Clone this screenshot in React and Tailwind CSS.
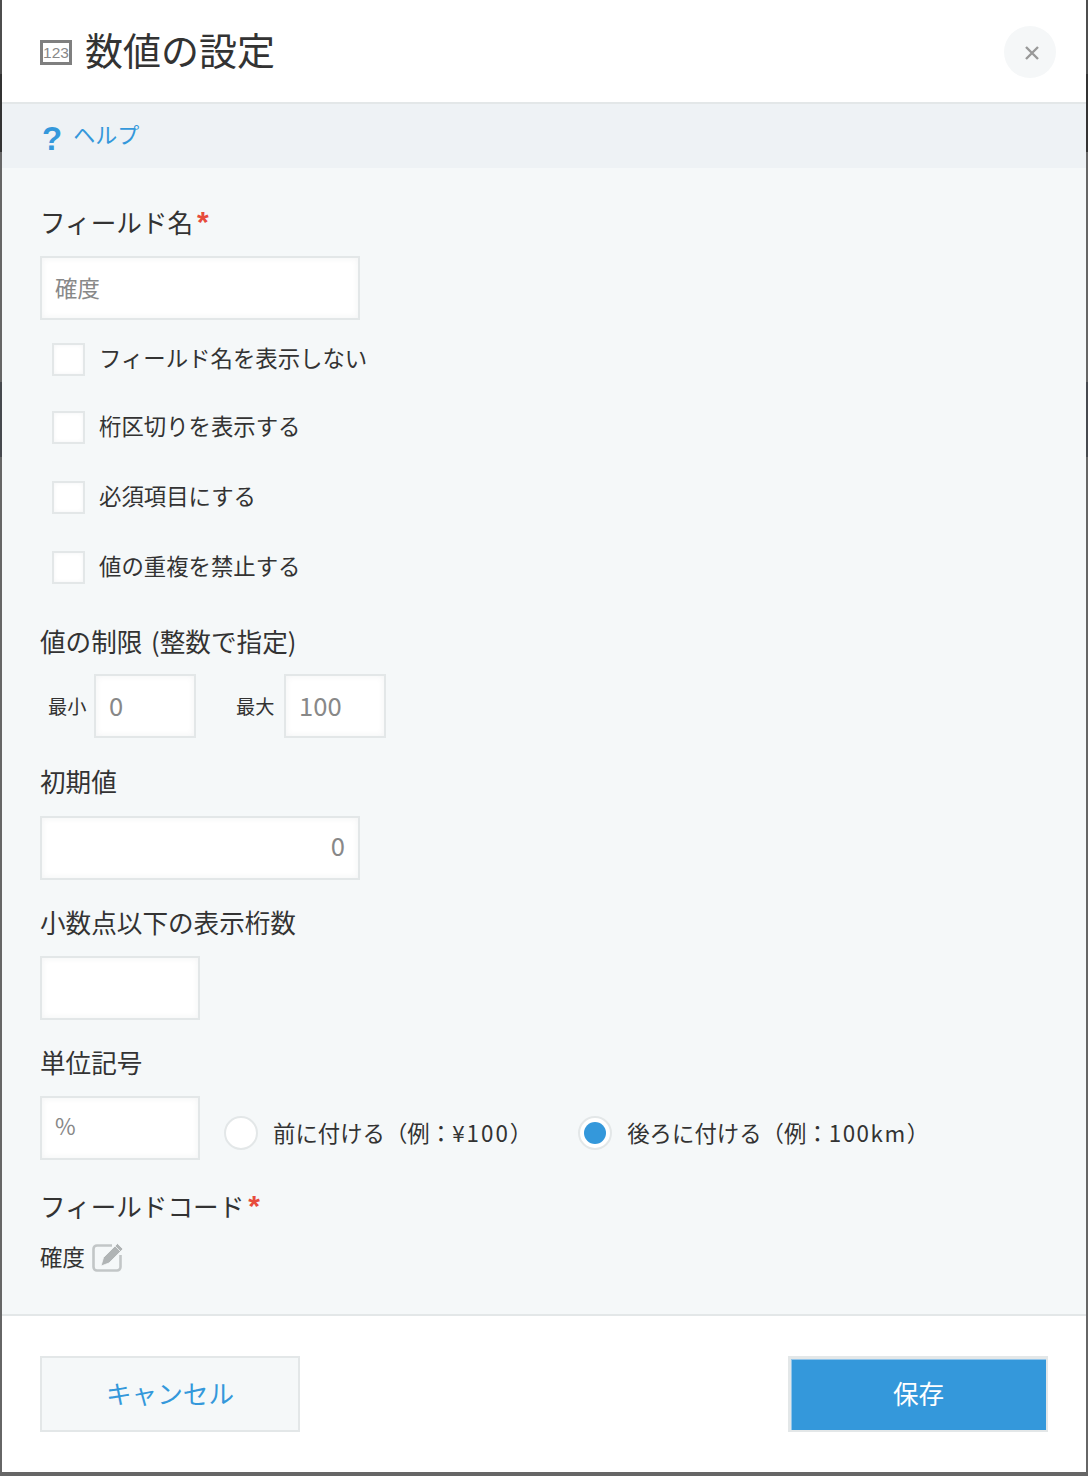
const FONT = "font-['Noto_Sans_CJK_JP','Noto_Sans',sans-serif]";

const inputCls = "h-16 border-2 border-[#e3e7e8] bg-white shadow-[inset_0_0_6px_rgba(55,70,80,0.07)] text-[#888888] flex items-center";

function Req() {
  return <span className="text-[#e74c3c] text-[30px] leading-none ml-1 h-[22px] -mt-[8px] inline-block font-bold font-['Liberation_Sans',sans-serif]">*</span>;
}

function Label({ children, className = "" }) {
  return <div className={`h-9 flex items-center pb-[2px] text-[25.6px] text-[#333333] whitespace-pre ${className}`}>{children}</div>;
}

function Check({ label, className = "" }) {
  return (
    <div className={`flex items-center h-8 pl-3 ${className}`}>
      <span className="w-[33px] h-[33px] border-2 border-[#e3e7e8] bg-white shadow-[inset_0_0_4px_rgba(55,70,80,0.06)]" />
      <span className="ml-[14px] pb-[2px] text-[22.4px] text-[#333333]">{label}</span>
    </div>
  );
}

function Radio({ checked, children, className = "" }) {
  return (
    <div className={`flex items-center mt-[11px] ${className}`}>
      <span className="w-[34px] h-[34px] rounded-full border-2 border-[#e3e7e8] bg-white flex items-center justify-center">
        {checked && <span className="w-[22px] h-[22px] rounded-full bg-[#3498db]" />}
      </span>
      <span className="ml-[15px] pb-[2px] text-[22.4px] text-[#333333] whitespace-nowrap">{children}</span>
    </div>
  );
}

function NumIcon() {
  return (
    <span className="w-8 h-[25px] mt-[3px] border-[3px] border-[#7f7f7f] bg-white flex items-center justify-center text-[15.5px] leading-none text-[#888888] font-['Liberation_Sans',sans-serif]">
      123
    </span>
  );
}

function EditIcon() {
  return (
    <svg width="32" height="32" viewBox="0 0 32 32" fill="none" className="ml-[7px] mt-[3px]">
      <path d="M20 4.5H5a3.5 3.5 0 0 0-3.5 3.5v18A3.5 3.5 0 0 0 5 29.5h20a3.5 3.5 0 0 0 3.5-3.5V14" stroke="#c2c6c7" strokeWidth="2.6" />
      <path d="M9 25l2.500-8.500L25.500 2.500l5.500 5.500-14 14z" fill="#b0b4b5" stroke="#f5f8f9" strokeWidth="0.8" />
      <path d="M23 5l5.500 5.500" stroke="#f5f8f9" strokeWidth="0.8" />
    </svg>
  );
}

export default function App() {
  return (
    <div className={`${FONT} w-[1088px] h-[1476px] bg-[linear-gradient(to_bottom,#4d4d4d_0,#4d4d4d_74px,#333333_74px,#333333_152px,#666666_152px,#666666_382px,#46494e_382px,#46494e_457px,#666666_457px,#666666_100%)] flex flex-col overflow-hidden`}>
      <div className="mx-[2px] mb-1 bg-white flex flex-col flex-1 min-h-0">
        <header className="h-[104px] shrink-0 border-b-2 border-[#e3e7e8] flex items-center pl-[38px] pr-[30px]">
          <NumIcon />
          <h1 className="ml-[13px] text-[38px] leading-none text-[#333333] font-normal -mt-1">数値の設定</h1>
          <button className="ml-auto mt-[2px] w-[52px] h-[52px] rounded-full bg-[#f5f7f8] flex items-center justify-center">
            <svg width="14" height="14" viewBox="0 0 14 14" className="ml-[3px] mt-[1px]">
              <path d="M1 1l12 12M13 1L1 13" stroke="#999999" strokeWidth="2.4" />
            </svg>
          </button>
        </header>

        <div className="h-[64px] shrink-0 bg-[#eef2f5] flex items-center pl-[40px] text-[#3498db]">
          <span className="text-[33px] font-bold leading-none font-['Liberation_Sans',sans-serif] mt-1">?</span>
          <span className="ml-[11px] text-[22px] leading-none -mt-[6px]">ヘルプ</span>
        </div>

        <main className="flex-1 bg-[#f5f8f9] border-b-2 border-[#e3e7e8] pl-[38px] pt-[37px]">
          <Label>フィールド名<Req /></Label>
          <div className={`${inputCls} w-[320px] mt-[15px] pl-[13px] text-[22.4px]`}>確度</div>

          <Check label="フィールド名を表示しない" className="mt-[23px]" />
          <Check label="桁区切りを表示する" className="mt-[36px]" />
          <Check label="必須項目にする" className="mt-[38px]" />
          <Check label="値の重複を禁止する" className="mt-[38px]" />

          <Label className="mt-[41px] [word-spacing:3px]">値の制限 (整数で指定)</Label>
          <div className="flex items-center mt-[14px]">
            <span className="ml-2 text-[19.2px] text-[#333333] w-[46px]">最小</span>
            <div className={`${inputCls} w-[102px] pl-[13px] pb-[2px] text-[25.6px]`}>0</div>
            <span className="ml-[40px] text-[19.2px] text-[#333333] w-[48px]">最大</span>
            <div className={`${inputCls} w-[102px] pl-[13px] pb-[2px] text-[25.6px]`}>100</div>
          </div>

          <Label className="mt-[26px]">初期値</Label>
          <div className={`${inputCls} w-[320px] mt-[16px] justify-end pr-[13px] pb-[6px] text-[25.6px]`}>0</div>

          <Label className="mt-[25px]">小数点以下の表示桁数</Label>
          <div className={`${inputCls} w-[160px] mt-[15px]`} />

          <Label className="mt-[25px]">単位記号</Label>
          <div className="flex items-center mt-[15px]">
            <div className={`${inputCls} w-[160px] pl-[13px] pb-[5px] text-[22.4px]`}>%</div>
            <Radio className="ml-6">前に付ける（例：<span className="tracking-[2px]">¥100</span>）</Radio>
            <Radio checked className="ml-[46px]">後ろに付ける（例：<span className="tracking-[1.500px]">100km</span>）</Radio>
          </div>

          <Label className="mt-[29px]">フィールドコード<Req /></Label>
          <div className="flex items-center mt-[13px] text-[22.4px] text-[#333333]">
            <span className="pt-[2px]">確度</span><EditIcon />
          </div>
        </main>

        <footer className="h-[156px] shrink-0 flex items-center justify-between pl-[38px] pr-[38px]">
          <button className="w-[260px] h-[76px] pb-[2px] border-2 border-[#e3e7e8] bg-[#f5f8f9] text-[#3498db] text-[25.6px] flex items-center justify-center">
            キャンセル
          </button>
          <button className="w-[260px] h-[76px] pb-[2px] border-l-[3px] border-t-[3px] border-r-2 border-b-2 border-[#e3e7e8] bg-[#3498db] shadow-[inset_1px_1px_0_#8fc4ea] text-white text-[25.6px] flex items-center justify-center">
            保存
          </button>
        </footer>
      </div>
    </div>
  );
}
